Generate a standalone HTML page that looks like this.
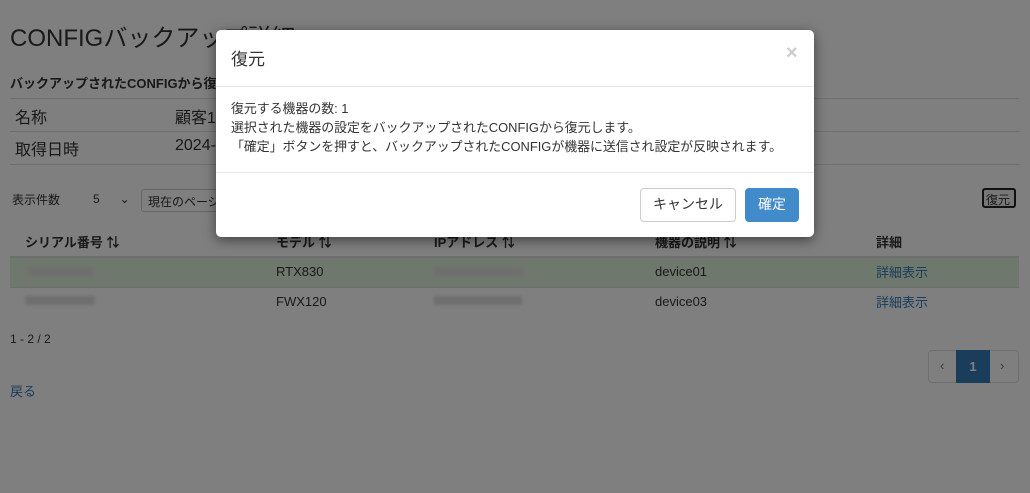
<!DOCTYPE html>
<html><head><meta charset="utf-8"><style>
*{box-sizing:border-box}
body{margin:0;width:1030px;height:493px;overflow:hidden;background:#fff;font-family:"Liberation Sans","Noto Sans CJK JP",sans-serif;color:#333;position:relative;font-size:13px}
.a{position:absolute;white-space:nowrap}
.line{position:absolute;height:1px;background:#ddd}
.blur{position:absolute;height:9px;background:#ddd;filter:blur(1.5px)}
.ov{position:absolute;inset:0;background:rgba(0,0,0,.5)}
.modal{position:absolute;left:216px;top:30px;width:598px;height:207px;background:#fff;border-radius:5px;box-shadow:0 3px 12px rgba(0,0,0,.5)}
</style></head><body>
<div class="a" style="left:10px;top:18px;font-size:24px">CONFIGバックアップ詳細</div>
<div class="a" style="left:10px;top:73px;font-weight:bold;font-size:13px">バックアップされたCONFIGから復元</div>
<div class="line" style="left:10px;top:98px;width:1009px"></div>
<div class="a" style="left:15px;top:104px;font-size:16px">名称</div>
<div class="a" style="left:175px;top:104px;font-size:16px">顧客1</div>
<div class="line" style="left:10px;top:131px;width:1009px"></div>
<div class="a" style="left:15px;top:136px;font-size:16px">取得日時</div>
<div class="a" style="left:175px;top:137px;font-size:16px">2024-</div>
<div class="line" style="left:10px;top:164px;width:1009px"></div>
<div class="a" style="left:12px;top:191px;font-size:12px">表示件数</div>
<div class="a" style="left:93px;top:192px;font-size:12px">5 &nbsp;&nbsp;&nbsp;&nbsp; ⌄</div>
<div class="a" style="left:141px;top:189px;width:120px;height:23px;border:1px solid #ccc;border-radius:3px;padding:3px 6px;font-size:12px">現在のページ</div>
<div class="a" style="left:982px;top:188px;width:34px;height:20px;border:2px solid #222;border-radius:3px;background:#eee;font-size:12px;padding:1px 2px">復元</div>
<div class="a" style="left:25px;top:232px;font-weight:bold">シリアル番号 ⇅</div>
<div class="a" style="left:276px;top:232px;font-weight:bold">モデル ⇅</div>
<div class="a" style="left:434px;top:232px;font-weight:bold">IPアドレス ⇅</div>
<div class="a" style="left:655px;top:232px;font-weight:bold">機器の説明 ⇅</div>
<div class="a" style="left:876px;top:232px;font-weight:bold">詳細</div>
<div class="line" style="left:10px;top:256px;width:1009px;height:2px"></div>
<div class="a" style="left:10px;top:258px;width:1009px;height:29px;background:#dff0d8"></div>
<div class="line" style="left:10px;top:287px;width:1009px"></div>
<div class="blur" style="left:28px;top:267px;width:65px"></div>
<div class="a" style="left:276px;top:264px">RTX830</div>
<div class="blur" style="left:434px;top:267px;width:88px"></div>
<div class="a" style="left:655px;top:264px">device01</div>
<div class="a" style="left:876px;top:262px;color:#337ab7">詳細表示</div>
<div class="blur" style="left:25px;top:296px;width:70px"></div>
<div class="a" style="left:276px;top:294px">FWX120</div>
<div class="blur" style="left:434px;top:296px;width:88px"></div>
<div class="a" style="left:655px;top:294px">device03</div>
<div class="a" style="left:876px;top:292px;color:#337ab7">詳細表示</div>
<div class="a" style="left:10px;top:332px;font-size:12px">1 - 2 / 2</div>
<div class="a" style="left:928px;top:350px;width:91px;height:33px;border:1px solid #ddd;border-radius:4px"></div>
<div class="a" style="left:940px;top:358px;color:#777">‹</div>
<div class="a" style="left:956px;top:350px;width:34px;height:33px;background:#337ab7;color:#fff;text-align:center;line-height:33px;font-weight:bold">1</div>
<div class="a" style="left:1000px;top:358px;color:#777">›</div>
<div class="a" style="left:10px;top:381px;color:#337ab7">戻る</div>
<div class="ov"></div>
<div class="modal">
<div class="a" style="left:15px;top:15px;font-size:17px">復元</div>
<div class="a" style="left:570px;top:12px;font-size:20px;color:#ccc;font-weight:bold">×</div>
<div class="line" style="left:0;top:56px;width:598px;background:#e5e5e5"></div>
<div class="a" style="left:15px;top:69px;font-size:12.9px;line-height:19px">復元する機器の数: 1<br>選択された機器の設定をバックアップされたCONFIGから復元します。<br>「確定」ボタンを押すと、バックアップされたCONFIGが機器に送信され設定が反映されます。</div>
<div class="line" style="left:0;top:142px;width:598px;background:#e5e5e5"></div>
<div class="a" style="left:424px;top:158px;width:96px;height:34px;border:1px solid #ccc;border-radius:4px;text-align:center;line-height:31px;font-size:14px">キャンセル</div>
<div class="a" style="left:529px;top:158px;width:54px;height:34px;background:#428bca;border-radius:4px;text-align:center;line-height:32px;font-size:14px;color:#fff">確定</div>
</div>
</body></html>
